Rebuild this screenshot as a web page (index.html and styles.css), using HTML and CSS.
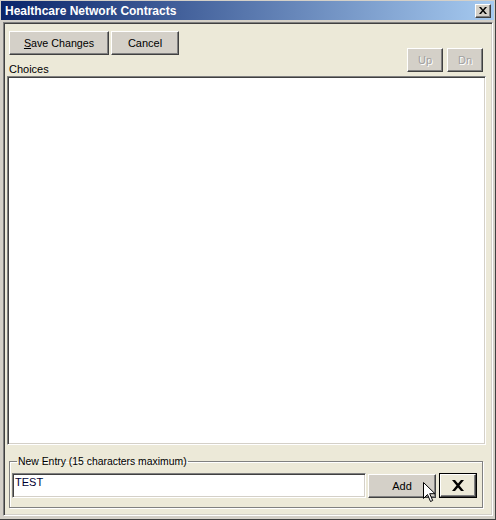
FILE: index.html
```html
<!DOCTYPE html>
<html>
<head>
<meta charset="utf-8">
<link rel="stylesheet" href="styles.css">
</head>
<body>
<div class="window">
  <div class="titlebar">
    <span class="title">Healthcare Network Contracts</span>
    <div class="close"><svg width="8" height="7" viewBox="0 0 8 7"><path d="M0 0h2l2 2.5L6 0h2L5 3.5 8 7H6L4 4.5 2 7H0l3-3.5z" fill="#000"/></svg></div>
  </div>
  <div class="client">
    <div class="header">
      <div class="left">
        <div class="btnrow">
          <div class="btn save"><u>S</u>ave Changes</div>
          <div class="btn cancel">Cancel</div>
        </div>
        <div class="label">Choices</div>
      </div>
      <div class="updn">
        <div class="btn small disabled">Up</div>
        <div class="btn small disabled">Dn</div>
      </div>
    </div>
    <div class="list"></div>
    <fieldset class="group">
      <legend>New Entry (15 characters maximum)</legend>
      <div class="entryrow">
        <div class="input">TEST</div>
        <div class="btn add">Add</div>
        <div class="xbtn"><div class="xface"><svg width="12" height="11" viewBox="0 0 12 11"><path d="M0 0h3l3 3.5L9 0h3L7.5 5.5 12 11H9L6 7.5 3 11H0l4.5-5.5z" fill="#000"/></svg></div></div>
      </div>
    </fieldset>
  </div>
  <svg class="cursor" width="13" height="21" viewBox="0 0 13 21"><path d="M0.5 0.5v16l4-4 3 7 2.2-1-3-6.8h5.3z" fill="#fff" stroke="#000" stroke-width="1"/></svg>
</div>
</body>
</html>
```
FILE: styles.css
```css
* { box-sizing: border-box; }
html, body { margin: 0; padding: 0; }
body {
  font-family: "Liberation Sans", Arial, sans-serif;
  font-size: 10.7px;
  color: #000;
  background: #d4d0c8;
}
.window {
  position: relative;
  width: 496px;
  height: 520px;
  background: #d4d0c8;
  border-right: 1px solid #404040;
  border-bottom: 1px solid #404040;
  padding: 1px 1px 0 1px;
  display: flex;
  flex-direction: column;
}
.titlebar {
  height: 19px;
  background: linear-gradient(to right, #0a246a, #a6caf0);
  display: flex;
  align-items: center;
  justify-content: space-between;
  padding: 0 3px 0 4px;
  flex: none;
}
.title {
  color: #fff;
  font-weight: bold;
  font-size: 12px;
}
.close {
  width: 16px;
  height: 14px;
  background: #d4d0c8;
  border: 1px solid;
  border-color: #fff #404040 #404040 #fff;
  box-shadow: inset -1px -1px #808080;
  display: flex;
  align-items: center;
  justify-content: center;
}
.client {
  flex: 1;
  margin: 2px 1px 3px 2px;
  background: #ece9d8;
  border: 1px solid;
  border-color: #808080 #fff #fff #808080;
  box-shadow: inset 1px 1px #404040, inset -1px -1px #d4d0c8;
  padding: 1px;
  display: flex;
  flex-direction: column;
}
.header {
  height: 52px;
  display: flex;
  justify-content: space-between;
  align-items: flex-end;
  flex: none;
}
.left {
  align-self: stretch;
  padding: 7px 0 0 4px;
  display: flex;
  flex-direction: column;
}
.btnrow { display: flex; gap: 2px; }
.btn {
  background: #d4d0c8;
  border: 1px solid;
  border-color: #fff #404040 #404040 #fff;
  box-shadow: inset -1px -1px #808080;
  display: flex;
  align-items: center;
  justify-content: center;
  height: 24px;
  color: #000;
  font-size: 11px;
}
.save { width: 100px; font-size: 10.7px; }
.cancel { width: 68px; }
.label {
  margin-top: 8px;
  height: 13px;
  line-height: 13px;
  font-size: 11px;
}
.updn {
  display: flex;
  gap: 4px;
  margin: 0 8px 4px 0;
}
.small { width: 36px; }
.disabled {
  color: #a0a0a0;
  text-shadow: 1px 1px #fff;
}
.list {
  flex: 1;
  margin: 0 5px 0 2px;
  background: #fff;
  border: 1px solid;
  border-color: #808080 #fff #fff #808080;
  box-shadow: inset 1px 1px #404040, inset -1px -1px #d4d0c8;
}
.group {
  flex: none;
  margin: 10px 8px 6px 4px;
  padding: 5px 2px 9px 2px;
  border: 1px solid #808080;
  box-shadow: inset 1px 1px #fff, 1px 1px #fff;
  min-width: 0;
}
.group legend {
  margin-left: 5px;
  padding: 0 1px;
  line-height: 13px;
  height: 13px;
  font-size: 10.4px;
}
.entryrow {
  display: flex;
  align-items: flex-start;
}
.input {
  width: 354px;
  height: 25px;
  background: #fff;
  border: 1px solid;
  border-color: #808080 #fff #fff #808080;
  box-shadow: inset 1px 1px #404040, inset -1px -1px #d4d0c8;
  padding: 2px 2px;
  line-height: 13px;
  font-size: 11px;
  color: #000033;
}
.add {
  width: 68px;
  margin-left: 2px;
  margin-top: 1px;
}
.xbtn {
  width: 38px;
  height: 25px;
  margin-left: 3px;
  border: 1px solid #000;
  background: #000;
}
.xface {
  width: 100%;
  height: 100%;
  background: #ece9d8;
  border: 1px solid;
  border-color: #fff #404040 #404040 #fff;
  box-shadow: inset -1px -1px #808080;
  display: flex;
  align-items: center;
  justify-content: center;
}
.cursor {
  position: absolute;
  left: 423px;
  top: 482px;
}
```
